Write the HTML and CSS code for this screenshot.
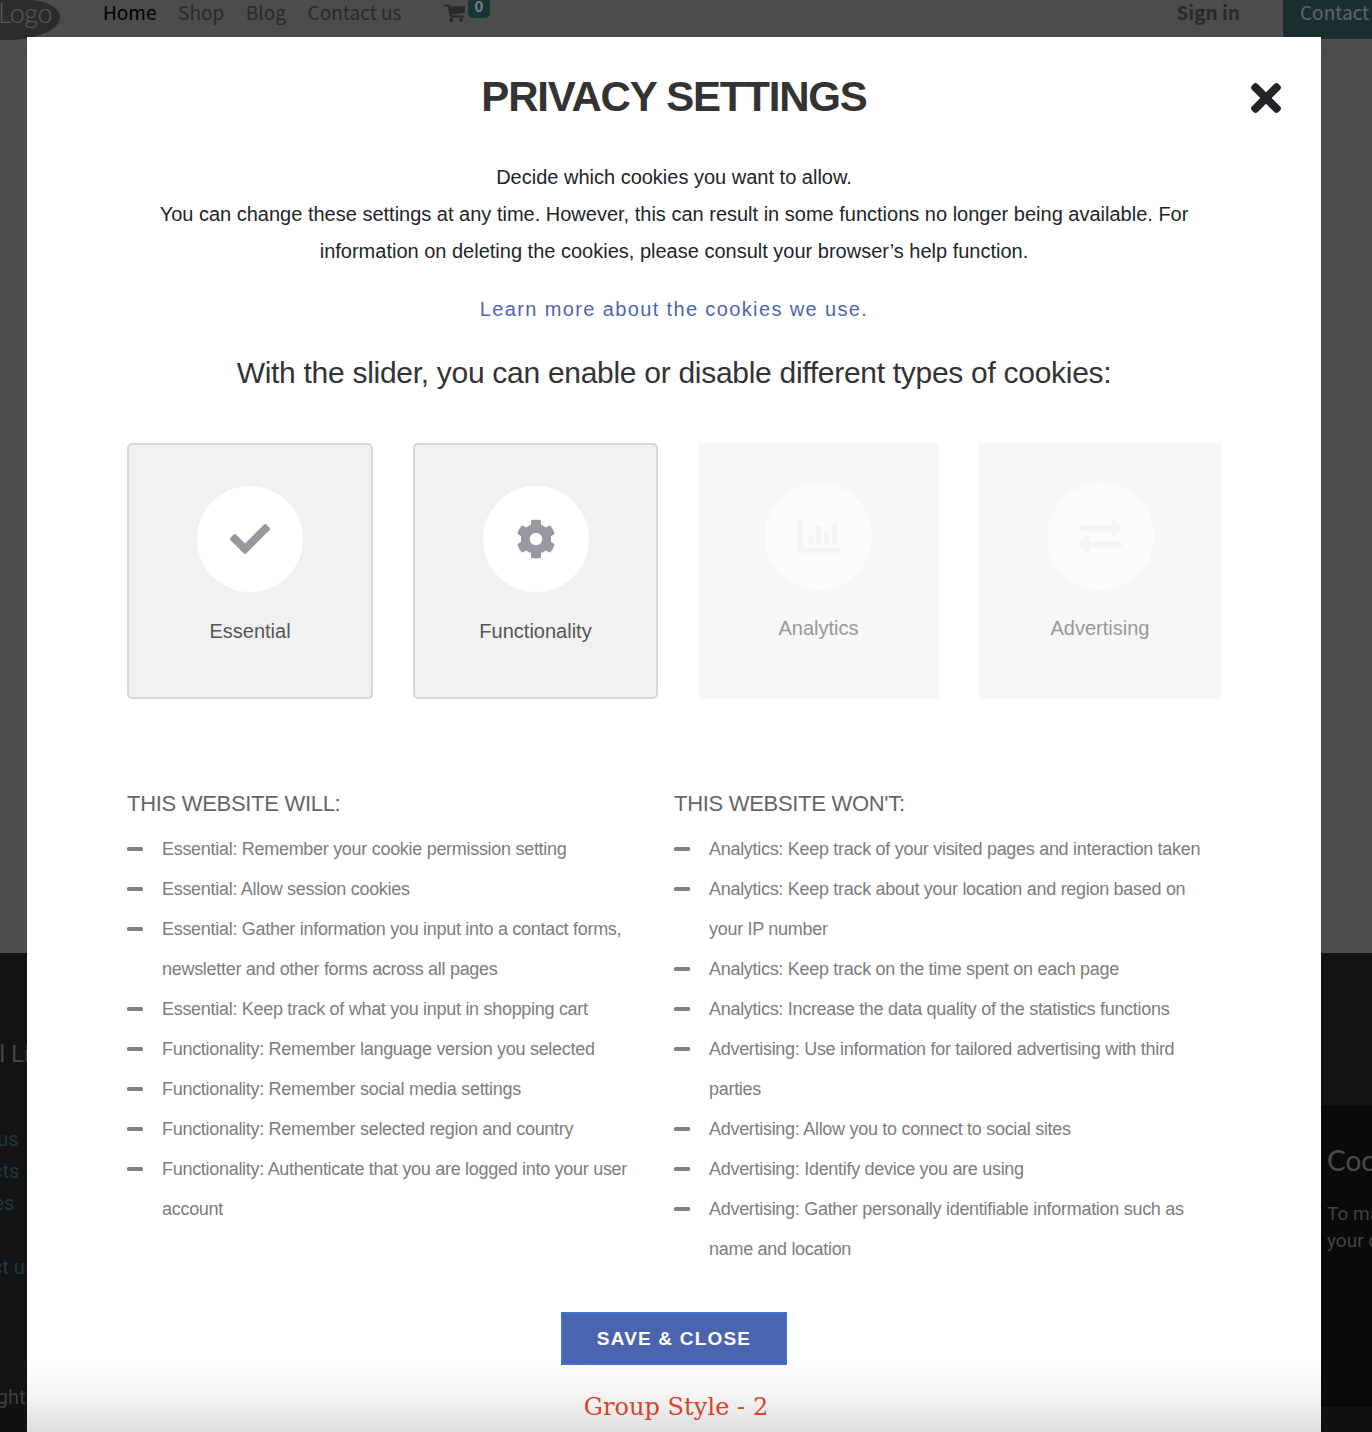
FILE: index.html
```html
<!DOCTYPE html>
<html lang="en">
<head>
<meta charset="utf-8">
<title>Privacy settings</title>
<link rel="stylesheet" href="styles.css">
</head>
<body>
<div class="page">
  <header class="site-header">
    <div class="logo"><span>Logo</span></div>
    <nav class="nav">
      <a class="active">Home</a><a>Shop</a><a>Blog</a><a>Contact us</a>
    </nav>
    <div class="cart">
      <svg width="21" height="18" viewBox="0 0 21 18"><path d="M1 1.5h3.6l2.3 11h12" fill="none" stroke="#292929" stroke-width="2" stroke-linecap="round" stroke-linejoin="round"/><path d="M5 2.3h16v6.5L7 10.6z" fill="#292929"/><circle cx="7.2" cy="16" r="1.9" fill="#292929"/><circle cx="17" cy="16" r="1.9" fill="#292929"/></svg>
      <span class="badge">0</span>
    </div>
    <a class="signin">Sign in</a>
    <a class="contact">Contact</a>
  </header>
  <main class="site-main"></main>
  <footer class="site-footer">
    <div class="links">
      <h5>Useful Links</h5>
      <a>About us</a><a>Products</a><a>Services</a><a class="spaced">Contact us</a>
      <div class="copyright">Copyright</div>
    </div>
    <aside class="cookie-bar">
      <h4>Coo</h4>
      <p>To ma<br>your c</p>
    </aside>
  </footer>
</div>

<section class="modal">
  <button class="close" aria-label="Close"><svg width="30" height="30" viewBox="0 80 352 352"><path fill="#212529" d="M242.72 256l100.07-100.07c12.28-12.28 12.28-32.19 0-44.48l-22.24-22.24c-12.28-12.28-32.19-12.28-44.48 0L176 189.28 75.93 89.21c-12.28-12.28-32.19-12.28-44.48 0L9.21 111.45c-12.28 12.28-12.28 32.19 0 44.48L109.28 256 9.21 356.07c-12.28 12.28-12.28 32.19 0 44.48l22.24 22.24c12.28 12.28 32.2 12.28 44.48 0L176 322.72l100.07 100.07c12.28 12.28 32.2 12.28 44.48 0l22.24-22.24c12.28-12.28 12.28-32.19 0-44.48L242.72 256z"/></svg></button>
  <h1>PRIVACY SETTINGS</h1>
  <p class="intro">Decide which cookies you want to allow.<br>You can change these settings at any time. However, this can result in some functions no longer being available. For<br>information on deleting the cookies, please consult your browser’s help function.</p>
  <a class="learn">Learn more about the cookies we use.</a>
  <h2>With the slider, you can enable or disable different types of cookies:</h2>

  <div class="cards">
    <div class="card on">
      <div class="circle"><svg width="40" height="40" viewBox="0 0 512 512"><path fill="#96999f" d="M173.898 439.404l-166.4-166.4c-9.997-9.997-9.997-26.206 0-36.204l36.203-36.204c9.997-9.998 26.207-9.998 36.204 0L192 312.69 432.095 72.596c9.997-9.997 26.207-9.997 36.204 0l36.203 36.204c9.997 9.997 9.997 26.206 0 36.204l-294.4 294.401c-9.998 9.997-26.207 9.997-36.204-.001z"/></svg></div>
      <span>Essential</span>
    </div>
    <div class="card on">
      <div class="circle"><svg width="40" height="40" viewBox="0 0 512 512"><path fill="#96999f" d="M487.4 315.7l-42.6-24.6c4.3-23.2 4.3-47 0-70.2l42.6-24.6c4.9-2.8 7.1-8.6 5.5-14-11.1-35.6-30-67.8-54.7-94.6-3.8-4.1-10-5.1-14.8-2.3L380.8 110c-17.9-15.4-38.5-27.3-60.8-35.1V25.8c0-5.6-3.9-10.5-9.4-11.7-36.7-8.2-74.3-7.8-109.2 0-5.5 1.2-9.4 6.1-9.4 11.7V75c-22.2 7.9-42.8 19.8-60.8 35.1L88.7 85.5c-4.9-2.8-11-1.9-14.8 2.3-24.7 26.7-43.6 58.9-54.7 94.6-1.7 5.4.6 11.2 5.5 14L67.3 221c-4.3 23.2-4.3 47 0 70.2l-42.6 24.6c-4.9 2.8-7.1 8.6-5.5 14 11.1 35.6 30 67.8 54.7 94.6 3.8 4.1 10 5.1 14.8 2.3l42.6-24.6c17.9 15.4 38.5 27.3 60.8 35.1v49.2c0 5.6 3.9 10.5 9.4 11.7 36.7 8.2 74.3 7.8 109.2 0 5.5-1.2 9.4-6.1 9.4-11.7v-49.2c22.2-7.9 42.8-19.8 60.8-35.1l42.6 24.6c4.9 2.8 11 1.9 14.8-2.3 24.7-26.7 43.6-58.9 54.7-94.6 1.5-5.5-.7-11.3-5.6-14.1zM256 336c-44.1 0-80-35.9-80-80s35.9-80 80-80 80 35.9 80 80-35.9 80-80 80z"/></svg></div>
      <span>Functionality</span>
    </div>
    <div class="card">
      <div class="circle"><svg width="43" height="33" viewBox="0 0 43 33" fill="#f4f4f4"><path d="M1 0h3.7a.8.8 0 0 1 .8.8v26.6h37v5.3H1a.9.9 0 0 1-.9-.9V.9A.9.9 0 0 1 1 0z"/><rect x="10.6" y="16.5" width="5.7" height="8.3" rx="1.3"/><rect x="18.6" y="5.8" width="5.7" height="19" rx="1.3"/><rect x="26.6" y="11.2" width="5.7" height="13.6" rx="1.3"/><rect x="34.6" y="3" width="5.7" height="21.8" rx="1.3"/></svg></div>
      <span>Analytics</span>
    </div>
    <div class="card">
      <div class="circle"><svg width="43" height="33" viewBox="0 0 43 33" fill="#f4f4f4"><path d="M2 5.500h30.200V2c0-2.200 2.200-2.800 3.500-1.500l6.500 6.300q1.300 1.500 0 3l-6.500 6.300c-1.300 1.300-3.500.7-3.500-1.500v-3.300H2a2 2 0 0 1-2-2v-1.800a2 2 0 0 1 2-2z"/><path d="M41 21.500H10.800V18c0-2.200-2.200-2.800-3.500-1.500L.8 22.800q-1.300 1.500 0 3l6.500 6.300c1.300 1.300 3.500.7 3.500-1.500v-3.300H41a2 2 0 0 0 2-2v-1.800a2 2 0 0 0-2-2z"/></svg></div>
      <span>Advertising</span>
    </div>
  </div>

  <div class="columns">
    <div>
      <h3>THIS WEBSITE WILL:</h3>
      <ul>
        <li>Essential: Remember your cookie permission setting</li>
        <li>Essential: Allow session cookies</li>
        <li>Essential: Gather information you input into a contact forms,<br>newsletter and other forms across all pages</li>
        <li>Essential: Keep track of what you input in shopping cart</li>
        <li>Functionality: Remember language version you selected</li>
        <li>Functionality: Remember social media settings</li>
        <li>Functionality: Remember selected region and country</li>
        <li>Functionality: Authenticate that you are logged into your user<br>account</li>
      </ul>
    </div>
    <div>
      <h3>THIS WEBSITE WON'T:</h3>
      <ul>
        <li>Analytics: Keep track of your visited pages and interaction taken</li>
        <li>Analytics: Keep track about your location and region based on<br>your IP number</li>
        <li>Analytics: Keep track on the time spent on each page</li>
        <li>Analytics: Increase the data quality of the statistics functions</li>
        <li>Advertising: Use information for tailored advertising with third<br>parties</li>
        <li>Advertising: Allow you to connect to social sites</li>
        <li>Advertising: Identify device you are using</li>
        <li>Advertising: Gather personally identifiable information such as<br>name and location</li>
      </ul>
    </div>
  </div>

  <button class="save">SAVE &amp; CLOSE</button>
  <div class="caption">Group Style - 2</div>
</section>
<div class="fade"></div>
</body>
</html>
```
FILE: styles.css
```css
* { box-sizing: border-box; }
body {
  margin: 0;
  position: relative;
  height: 1432px;
  overflow: hidden;
  font-family: "Liberation Sans", Arial, sans-serif;
}
h1, h2, h3, h4, h5, p, ul { margin: 0; padding: 0; font-weight: 400; }
button { border: 0; padding: 0; background: none; font-family: inherit; }

/* dimmed site behind the dialog */
.page { height: 1432px; display: flex; flex-direction: column; background: #4c4c4c; }
.site-header {
  height: 52px;
  flex: none;
  display: flex;
  align-items: flex-start;
  border-bottom: 1px solid #484848;
  font-family: "Noto Sans CJK SC", sans-serif;
  font-size: 19px;
  line-height: 24px;
  color: #292929;
}
.logo {
  width: 60px;
  height: 40px;
  background: #2c2c2c;
  border-radius: 0 34px 54px 0 / 0 18px 24px 0;
  font-family: Lato, sans-serif;
  font-weight: 300;
  font-size: 27px;
  line-height: 26px;
  color: #5a5a5a;
  display: flex;
  justify-content: flex-end;
  padding-right: 8px;
  letter-spacing: -0.5px;
}
.nav { display: flex; gap: 21.6px; margin-left: 43px; width: 341px; white-space: nowrap; }
.nav .active { color: #000; }
.cart { display: flex; gap: 3px; }
.cart svg { margin-top: 4px; }
.badge {
  width: 22px;
  height: 18px;
  border-radius: 0 0 5px 5px;
  background: #1a3334;
  color: #7a8282;
  font-size: 15px;
  font-weight: 700;
  line-height: 12px;
  text-align: center;
}
.signin { margin-left: auto; width: 106.500px; font-weight: 700; }
.contact {
  width: 89px;
  height: 39px;
  padding-left: 17px;
  background: #1a2e30;
  border-radius: 0 0 0 4px;
  color: #5e6869;
  white-space: nowrap;
}
.site-main { height: 901px; flex: none; }
.site-footer {
  flex: 1;
  display: flex;
  justify-content: space-between;
  background: #111315;
  font-family: Roboto, sans-serif;
}
.links {
  margin-left: -61px;
  padding-top: 85px;
  display: flex;
  flex-direction: column;
  font-size: 20px;
  line-height: 32px;
  color: #1f3a3b;
}
.links h5 { font-size: 24px; line-height: 32px; color: #464646; margin: 0 0 53px -2px; }
.links .spaced { margin-top: 32px; }
.copyright { margin: 98px 0 0 1px; color: #414243; }
.cookie-bar {
  width: 51px;
  height: 302px;
  margin-top: 152px;
  padding: 37px 0 0 6px;
  overflow: hidden;
  background: #0a0a0a;
  color: #434343;
  white-space: nowrap;
}
.cookie-bar h4 { font-family: Lato, sans-serif; font-size: 28px; line-height: 36px; color: #4b4b4b; }
.cookie-bar p { margin-top: 22px; font-size: 19px; line-height: 27px; }

/* dialog */
.modal {
  position: absolute;
  left: 27px;
  top: 37px;
  width: 1294px;
  height: 1395px;
  padding: 0 100px;
  background: #fff;
  display: flex;
  flex-direction: column;
  align-items: center;
  white-space: nowrap;
}
.close { position: absolute; right: 40px; top: 46px; width: 30px; height: 30px; }
.close svg { display: block; }
h1 { margin-top: 36px; font-size: 42px; line-height: 48px; font-weight: 700; color: #333; letter-spacing: -1.200px; }
.intro { margin-top: 38px; font-size: 20px; line-height: 37px; color: #212529; text-align: center; }
.learn { margin-top: 24px; font-size: 20px; line-height: 30px; letter-spacing: 1.370px; color: #4b66b5; }
h2 { margin-top: 30px; font-size: 30px; line-height: 38px; letter-spacing: -0.290px; color: #333; }
.cards {
  width: 1094px;
  margin-top: 51px;
  display: grid;
  grid-template-columns: 246px 245px 241px 242px;
  gap: 40px;
}
.card {
  height: 256px;
  padding-top: 40px;
  display: flex;
  flex-direction: column;
  align-items: center;
  background: #f7f7f7;
  color: #999;
  font-size: 20px;
  line-height: 30px;
}
.card.on { padding-top: 41px; background: #f1f1f1; border: 2px solid #d6d6db; border-radius: 5px; color: #555; }
.circle {
  width: 107px;
  height: 107px;
  margin-bottom: 23px;
  border-radius: 50%;
  background: #fcfcfc;
  display: flex;
  align-items: center;
  justify-content: center;
}
.on .circle { width: 106px; height: 106px; margin-bottom: 24px; background: #fff; }
.columns { width: 1094px; margin-top: 89px; display: grid; grid-template-columns: 1fr 1fr; color: #7d7d7d; }
h3 { font-size: 22px; line-height: 32px; letter-spacing: -0.300px; color: #666; }
ul { margin-top: 9px; list-style: none; font-size: 18px; line-height: 40px; letter-spacing: -0.295px; }
li { display: flex; }
li::before { content: ""; flex: none; width: 16px; height: 3.500px; margin: 18px 19px 0 0; border-radius: 1.500px; background: #808080; }
.save {
  width: 226px;
  height: 53px;
  margin-top: 43px;
  border: 2px solid #4271cf;
  background: #4b64b0;
  color: #fff;
  font-size: 19px;
  font-weight: 700;
  letter-spacing: 1.200px;
}
.caption { margin: 25px 0 0 4px; font-family: "DejaVu Serif", serif; font-size: 24px; line-height: 34px; color: #e8492b; letter-spacing: 0.050px; }
.fade {
  position: absolute;
  left: 0;
  right: 0;
  bottom: 0;
  height: 76px;
  background: linear-gradient(rgba(0, 0, 0, 0), rgba(0, 0, 0, 0.04) 50%, rgba(0, 0, 0, 0.13));
  pointer-events: none;
}
```
